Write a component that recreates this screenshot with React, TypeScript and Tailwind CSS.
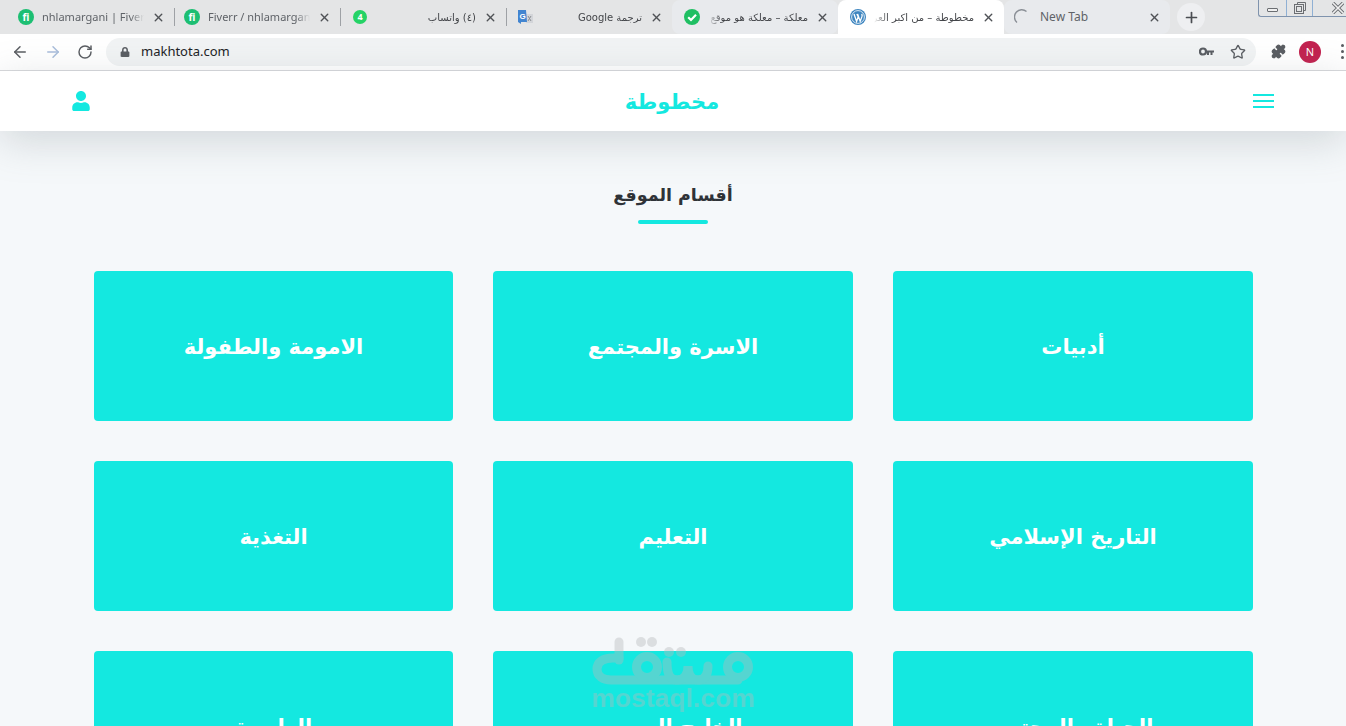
import { ArrowLeft, ArrowRight, RotateCw, Star, Puzzle, X, Plus } from "lucide-react";
import { FaUser, FaLock } from "react-icons/fa";

const ui = "font-['Noto_Sans','Liberation_Sans',sans-serif]";
const arabic = "font-['DejaVu_Sans',sans-serif]";

function Fiverr() {
  return (
    <span className="w-4 h-4 rounded-full bg-[#1dbf73] text-white text-[10px] font-bold leading-4 text-center shrink-0">fi</span>
  );
}

function WhatsApp() {
  return (
    <span className="ml-[3px] w-[14px] h-[14px] rounded-full bg-[#25d366] text-white text-[9px] font-bold leading-[14px] text-center shrink-0">4</span>
  );
}

function Translate() {
  return (
    <svg width="17" height="16" viewBox="0 0 17 16" className="ml-[1px] shrink-0">
      <path d="M9 5h7v9H9z" fill="#d3d5d9" />
      <path d="M11 7l3 5M14 7l-3 5" stroke="#8b8e93" strokeWidth="1" />
      <path d="M1 1h8l1 12H4v2l-3-2z" fill="#4285d0" />
      <text x="2.5" y="10" fontSize="8" fontWeight="700" fill="#fff" fontFamily="Liberation Sans">G</text>
    </svg>
  );
}

function Check() {
  return (
    <svg width="16" height="16" viewBox="0 0 16 16" className="ml-[2px] shrink-0">
      <circle cx="8" cy="8" r="8" fill="#1fbf63" />
      <path d="M4.2 8.2 7 11l5-5.2" fill="none" stroke="#fff" strokeWidth="2.2" />
    </svg>
  );
}

function Wordpress() {
  return (
    <svg width="16" height="16" viewBox="0 0 16 16" className="ml-[2px] shrink-0">
      <circle cx="8" cy="8" r="8" fill="#3f86c0" />
      <circle cx="8" cy="8" r="6.4" fill="none" stroke="#fff" strokeWidth="0.8" />
      <path d="M4 5l2.6 7.4L8.2 7.6 6.8 5M7.6 5l2.6 7.4L12 7.4c.3-1 .1-1.8-.4-2.4" fill="none" stroke="#fff" strokeWidth="1.3" />
    </svg>
  );
}

function Spinner() {
  return (
    <svg width="16" height="16" viewBox="0 0 16 16" className="shrink-0">
      <path d="M3 13.5A7 7 0 0 1 12.5 2.5" fill="none" stroke="#8a8f96" strokeWidth="1.4" />
    </svg>
  );
}

function Tab(props: { icon: React.ReactNode; title: string; rtl?: boolean; kind?: "active" | "grey" | "plain"; sep?: boolean }) {
  const { kind = "plain" } = props;
  return (
    <div className="relative w-[166px] h-[34px] shrink-0">
      <div className={`h-full flex items-center pl-[10px] pr-[9px] rounded-t-[8px] ${kind === "active" ? "bg-white" : kind === "grey" ? "bg-[#e8eaed] rounded-b-[8px]" : ""}`}>
        {props.icon}
        {props.rtl ? (
          <span dir="rtl" className={`flex-1 min-w-0 mx-[8px] overflow-hidden whitespace-nowrap ${arabic} text-[10px] text-[#44464a] [mask-image:linear-gradient(to_right,transparent,black_14px)]`}>
            {props.title}
          </span>
        ) : kind === "grey" ? (
          <span className={`flex-1 min-w-0 ml-[10px] mr-[8px] whitespace-nowrap ${ui} text-[12px] text-[#5f6368]`}>
            {props.title}
          </span>
        ) : (
          <span className={`flex-1 min-w-0 mx-[8px] overflow-hidden whitespace-nowrap ${ui} text-[11px] text-[#5f6368] [mask-image:linear-gradient(to_left,transparent,black_14px)]`}>
            {props.title}
          </span>
        )}
        <X size={13} strokeWidth={2.6} className="text-[#4f5256] shrink-0" />
      </div>
      {props.sep && <div className="absolute right-[-1px] top-[8px] w-px h-[18px] bg-[#9ea1a5]" />}
    </div>
  );
}

function TabStrip() {
  return (
    <div className="h-[34px] bg-[#e4e5e6] flex pl-[8px] relative">
      <Tab icon={<Fiverr />} title="nhlamargani | Fiverr" sep />
      <Tab icon={<Fiverr />} title="Fiverr / nhlamargani" sep />
      <Tab icon={<WhatsApp />} title="(٤) واتساب" rtl sep />
      <Tab icon={<Translate />} title="ترجمة Google" rtl sep />
      <Tab icon={<Check />} title="معلكة – معلكة هو موقع" rtl kind="grey" />
      <Tab icon={<Wordpress />} title="مخطوطة – من اكبر العرب" rtl kind="active" />
      <Tab icon={<Spinner />} title="New Tab" kind="grey" />
      <div className="w-[28px] h-[28px] ml-[7px] mt-[3px] rounded-full bg-[#eeeff1] flex items-center justify-center">
        <Plus size={17} strokeWidth={2.4} className="text-[#4a4d52]" />
      </div>
      <div className="absolute right-0 top-0 w-[88px] h-[17px] flex border border-t-0 border-r-0 border-[#7f93ad] rounded-bl-[3px] text-[#55585c]">
        <div className="w-[28px] flex items-center justify-center border-r border-[#8fb0d4] pt-[3px]">
          <div className="w-[11px] h-[4px] border border-[#6b6e72] rounded-[1px] bg-[#f0f0f0]" />
        </div>
        <div className="w-[26px] flex items-center justify-center border-r border-[#8fb0d4]">
          <svg width="12" height="12" viewBox="0 0 12 12" fill="none" stroke="#6b6e72" strokeWidth="1">
            <path d="M3.5 2.5V.5h8v8h-2" />
            <rect x="0.5" y="2.5" width="9" height="9" />
            <rect x="2.5" y="4.5" width="5" height="5" />
          </svg>
        </div>
        <div className="flex-1 flex items-center justify-end pr-[2px]">
          <svg width="12" height="12" viewBox="0 0 12 12">
            <path d="M1 1l10 10M11 1L1 11" stroke="#6b6e72" strokeWidth="3.4" />
            <path d="M1 1l10 10M11 1L1 11" stroke="#f0f0f0" strokeWidth="1.6" />
          </svg>
        </div>
      </div>
    </div>
  );
}

function Toolbar() {
  return (
    <div className="h-[37px] bg-white border-b border-[#d8d9dc] flex items-center pl-[11px] pb-[1px]">
      <ArrowLeft size={18} strokeWidth={2} className="text-[#5a5d62]" />
      <ArrowRight size={18} strokeWidth={2} className="ml-[15px] text-[#a9bddb]" />
      <RotateCw size={16} strokeWidth={2.2} className="ml-[15px] text-[#5a5d62]" />
      <div className="ml-[13px] w-[1150px] h-[28px] rounded-full bg-[#f1f3f4] flex items-center pl-[14px] pr-[10px]">
        <FaLock size={10} className="text-[#5a5d62]" />
        <span className={`${ui} ml-[11px] text-[13px] text-[#202124]`}>makhtota.com</span>
        <svg width="15" height="9" viewBox="0 0 15 9" className="ml-auto">
          <circle cx="4" cy="4.5" r="3" fill="none" stroke="#5a5d62" strokeWidth="2.2" />
          <path d="M6 3.5h9v2h-1.5v2.5h-2V5.5H10V8H8V5.5H6z" fill="#5a5d62" />
        </svg>
        <Star size={16} strokeWidth={2} className="ml-[16px] text-[#5a5d62]" />
      </div>
      <Puzzle size={15} strokeWidth={2} className="ml-[15px] text-[#5a5d62] fill-[#5a5d62]" />
      <div className={`${ui} ml-[13px] w-[22px] h-[22px] rounded-full bg-[#c2214f] text-white text-[11px] leading-[22px] text-center`}>N</div>
      <div className="ml-[20px] flex flex-col gap-[3px]">
        <span className="w-[3px] h-[3px] rounded-full bg-[#5a5d62]" />
        <span className="w-[3px] h-[3px] rounded-full bg-[#5a5d62]" />
        <span className="w-[3px] h-[3px] rounded-full bg-[#5a5d62]" />
      </div>
    </div>
  );
}

function Watermark() {
  return (
    <div className="absolute left-[591px] top-[636px] w-[165px] flex flex-col items-center pointer-events-none opacity-40">
      <svg width="165" height="52" viewBox="0 0 165 52">
        <g fill="none" stroke="#b6b9bb" strokeWidth="9" strokeLinecap="round">
          <path d="M28 6V24" />
          <path d="M28 22H22C12 22 6 26 6 33C6 40 12 44 20 44H147" />
          <circle cx="147" cy="31" r="10.5" />
          <circle cx="56" cy="31" r="10.5" />
          <path d="M76 26C76 40 80 44 86 44C92 44 97 40 97 30C97 40 102 44 107 44C113 44 117 40 117 30" />
        </g>
        <g fill="#b6b9bb">
          <circle cx="50" cy="6" r="5" />
          <circle cx="61" cy="6" r="5" />
          <circle cx="78" cy="16" r="5" />
          <circle cx="90" cy="16" r="5" />
        </g>
      </svg>
      <span className="-mt-[2px] font-['Liberation_Sans',sans-serif] text-[26.5px] leading-[24px] font-bold text-[#b6b9bb]">mostaql.com</span>
    </div>
  );
}

const sections = ["أدبيات", "الاسرة والمجتمع", "الامومة والطفولة", "التاريخ الإسلامي", "التعليم", "التغذية", "الحياة والمجتمع", "الخليج العربي", "الطبيعة"];

export default function App() {
  return (
    <div className="relative w-[1346px] h-[726px] overflow-hidden bg-[#f5f8fa]">
      <TabStrip />
      <Toolbar />
      <header className="relative z-10 h-[60px] bg-white flex items-center justify-between pl-[71px] pr-[72px] shadow-[0_10px_40px_rgba(130,140,145,0.3)]">
        <FaUser size={20} className="text-[#14e8e0]" />
        <span className={`${arabic} pt-[2px] text-[21px] font-bold text-[#14e8e0] leading-none`}>مخطوطة</span>
        <div className="w-[21px] flex flex-col gap-[4px]">
          <span className="h-[2px] bg-[#14e8e0]" />
          <span className="h-[2px] bg-[#14e8e0]" />
          <span className="h-[2px] bg-[#14e8e0]" />
        </div>
      </header>
      <main dir="rtl" className="pt-[49px] px-[93px]">
        <h2 className={`${arabic} text-center text-[17.5px] leading-[30px] font-bold text-[#2f3338]`}>أقسام الموقع</h2>
        <div className="mx-auto mt-[10px] w-[70px] h-[4px] rounded-full bg-[#14e8e0]" />
        <div className="mt-[47px] grid grid-cols-[360px_360px_359px] gap-[40px]">
          {sections.map((s) => (
            <div key={s} className={`${arabic} h-[150px] pt-[4px] rounded-[4px] bg-[#14e8e0] flex items-center justify-center text-white text-[21px] font-bold`}>
              {s}
            </div>
          ))}
        </div>
      </main>
      <Watermark />
    </div>
  );
}
